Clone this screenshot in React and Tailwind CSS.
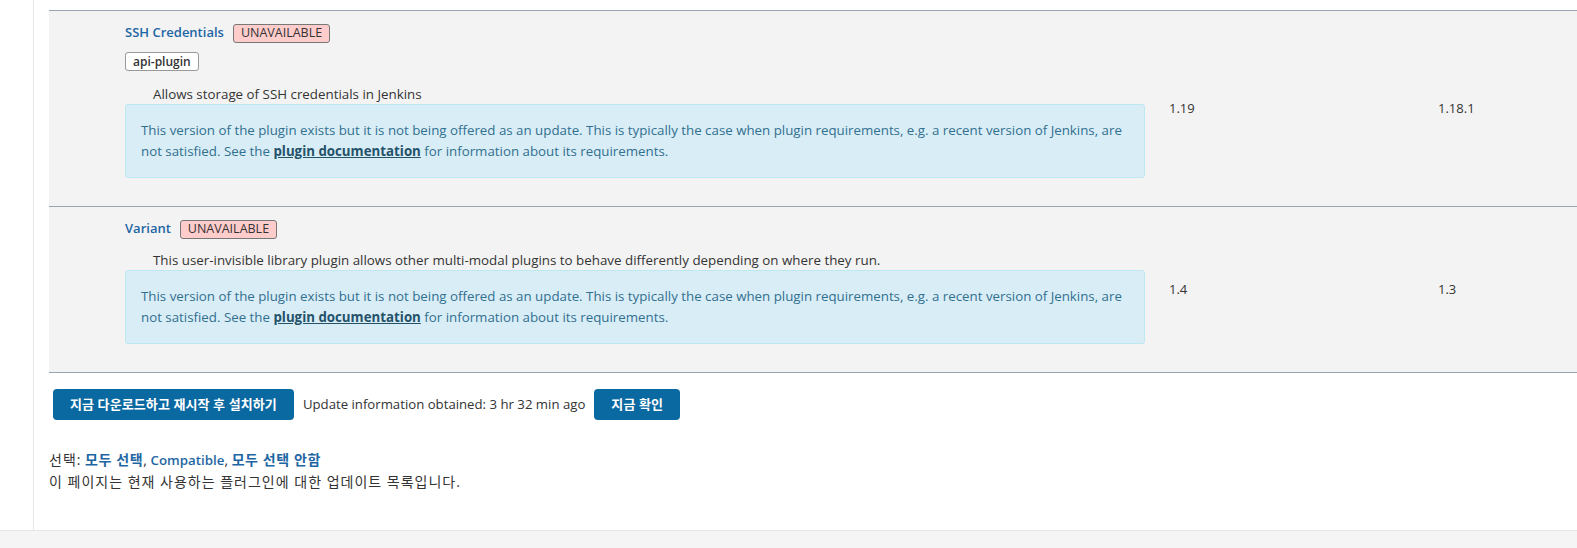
import React from 'react';

const font = { fontFamily: '"Segoe UI", "Open Sans", "Noto Sans CJK KR", sans-serif' };

function InfoBox() {
    return (
        <div className="border border-[#bce8f1] bg-[#d9edf7] text-[#31708f] text-[13.3px] rounded-[3px] px-[15px] py-[15px] leading-[21px]">
            This version of the plugin exists but it is not being offered as an update. This is typically the case when plugin requirements, e.g. a recent version of Jenkins, are not satisfied. See the{' '}
            <a href="#" className="font-bold underline text-[#245269]">plugin documentation</a>{' '}
            for information about its requirements.
        </div>
    );
}

function Unavailable() {
    return (
        <span className="inline-flex items-center h-[19px] px-[7px] ml-[9px] text-[12.5px] leading-none text-[#333] bg-[#ffcccc] border border-[#777] rounded-[3px]">
            UNAVAILABLE
        </span>
    );
}

function PluginRow({ name, tags, description, installed, available }) {
    return (
        <div className="grid grid-cols-[64px_1044px_269px_1fr] border-b border-[#9aa5b1]">
            <div></div>
            <div className="px-[12px] pt-[12px] pb-[28px]">
                <div className="flex items-center h-[20px]">
                    <a href="#" className="text-[#1e66a3] font-semibold">{name}</a>
                    <Unavailable />
                </div>
                {tags && (
                    <div className="mt-[9px] flex">
                        <span className="inline-flex items-center h-[19px] px-[7px] text-[12px] leading-none font-semibold text-[#333] bg-white border border-[#999] rounded-[3px]">
                            {tags}
                        </span>
                    </div>
                )}
                <div className={`${tags ? 'mt-[13px]' : 'mt-[11px]'} pl-[28px] leading-[20px] text-[13.35px] text-[#333]`}>{description}</div>
                <InfoBox />
            </div>
            <div className="px-[12px] flex items-center text-[#333]">{installed}</div>
            <div className="px-[12px] flex items-center text-[#333]">{available}</div>
        </div>
    );
}

export default function App() {
    return (
        <div className="w-[1577px] h-[548px] overflow-hidden bg-white text-[13px] flex flex-col" style={font}>
            <div className="flex flex-1 min-h-0">
                <div className="w-[34px] border-r border-[#e6e6e6] shrink-0"></div>
                <div className="flex-1 pl-[15px] pt-[10px] min-w-0">
                    <div className="bg-[#f3f3f3] border-t border-[#9aa5b1]">
                        <PluginRow
                            name="SSH Credentials"
                            tags="api-plugin"
                            description="Allows storage of SSH credentials in Jenkins"
                            installed="1.19"
                            available="1.18.1"
                        />
                        <PluginRow
                            name="Variant"
                            description="This user-invisible library plugin allows other multi-modal plugins to behave differently depending on where they run."
                            installed="1.4"
                            available="1.3"
                        />
                    </div>

                    <div className="flex items-center gap-[9px] mt-[16px] ml-[4px]">
                        <button type="button" className="h-[31px] px-[17px] rounded-[4px] bg-[#0b69a1] text-white font-bold tracking-[0.1px]">
                            지금 다운로드하고 재시작 후 설치하기
                        </button>
                        <span className="text-[#333] text-[13.2px]">Update information obtained: 3 hr 32 min ago</span>
                        <button type="button" className="h-[31px] px-[17px] rounded-[4px] bg-[#0b69a1] text-white font-bold tracking-[0.1px]">
                            지금 확인
                        </button>
                    </div>

                    <div className="mt-[29px] leading-[21px] text-[#333] text-[14px]">
                        <div>
                            <span className="tracking-[1px]">선택:</span>{' '}
                            <a href="#" className="text-[#1e66a3] font-semibold tracking-[0.6px]">모두 선택</a>,{' '}
                            <a href="#" className="text-[#1e66a3] font-semibold text-[13.3px]">Compatible</a>,{' '}
                            <a href="#" className="text-[#1e66a3] font-semibold tracking-[0.6px]">모두 선택 안함</a>
                        </div>
                        <div className="tracking-[1px]">이 페이지는 현재 사용하는 플러그인에 대한 업데이트 목록입니다.</div>
                    </div>
                </div>
            </div>
            <div className="h-[18px] shrink-0 bg-[#f5f5f5] border-t border-[#e6e6e6]"></div>
        </div>
    );
}
